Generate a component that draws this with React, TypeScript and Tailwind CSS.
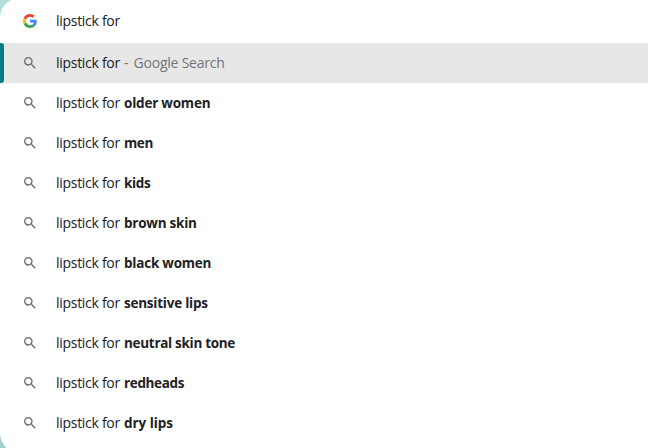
const suggestions = [
  { text: "older women", className: "tracking-[-0.21px]" },
  { text: "men", className: "tracking-[-0.4px]" },
  { text: "kids", className: "tracking-[-0.35px]" },
  { text: "brown skin", className: "tracking-[-0.24px]" },
  { text: "black women", className: "tracking-[-0.22px]" },
  { text: "sensitive lips", className: "tracking-[-0.24px]" },
  { text: "neutral skin tone", className: "tracking-[-0.3px]" },
  { text: "redheads", className: "tracking-[-0.35px]" },
  { text: "dry lips", className: "tracking-[-0.05px]" },
];

function GoogleIcon() {
  return (
    <svg viewBox="0 0 48 48" className="mx-px h-3.5 w-3.5 shrink-0">
      <path
        fill="#EA4335"
        d="M24 9.5c3.54 0 6.71 1.22 9.21 3.6l6.85-6.85C35.9 2.38 30.47 0 24 0 14.62 0 6.51 5.38 2.56 13.22l7.98 6.19C12.43 13.72 17.74 9.5 24 9.5z"
      />
      <path
        fill="#4285F4"
        d="M46.98 24.55c0-1.57-.15-3.09-.38-4.55H24v9.02h12.94c-.58 2.96-2.26 5.48-4.78 7.18l7.73 6c4.51-4.18 7.09-10.36 7.09-17.65z"
      />
      <path
        fill="#FBBC05"
        d="M10.53 28.59c-.48-1.45-.76-2.99-.76-4.59s.27-3.14.76-4.59l-7.98-6.19C.92 16.46 0 20.12 0 24c0 3.88.92 7.54 2.56 10.78l7.97-6.19z"
      />
      <path
        fill="#34A853"
        d="M24 48c6.48 0 11.93-2.13 15.89-5.81l-7.73-6c-2.15 1.45-4.92 2.3-8.16 2.3-6.26 0-11.57-4.22-13.47-9.91l-7.98 6.19C6.51 42.62 14.62 48 24 48z"
      />
    </svg>
  );
}

function SearchIcon() {
  return (
    <svg viewBox="0 0 24 24" className="h-4 w-4 shrink-0" fill="#6b6b6b">
      <path d="M15.5 14h-.79l-.28-.27A6.471 6.471 0 0 0 16 9.5 6.5 6.5 0 1 0 9.5 16c1.61 0 3.09-.59 4.23-1.57l.27.28v.79l5 4.99L20.49 19l-4.99-5zm-6 0C7.01 14 5 11.99 5 9.5S7.01 5 9.5 5 14 7.01 14 9.5 11.99 14 9.5 14z" />
    </svg>
  );
}

export default function App() {
  return (
    <div className="h-[448px] w-[648px] overflow-hidden bg-gradient-to-b from-[#b3e0dc] to-[#a3d0ca] font-['Open_Sans',sans-serif] text-sm leading-5 text-[#202124]">
      <div className="-mt-0.5 h-[455px] rounded-l-[20px] bg-white pt-0.5">
        <div className="flex h-[43px] items-center gap-[18px] pb-px pl-[22px]">
          <GoogleIcon />
          <span className="tracking-[-0.29px]">lipstick for</span>
        </div>
        <ul>
          <li className="flex h-10 items-center bg-[#e7e7e7]">
            <span className="mr-[18px] h-10 w-1 rounded-r-[3px] bg-[#007b83]" />
            <SearchIcon />
            <span className="ml-[18px] w-[68px] tracking-[-0.29px]">
              lipstick for
            </span>
            <span className="mr-[5px] text-[#70757a]">-</span>
            <span className="tracking-[-0.22px] text-[#70757a]">
              Google Search
            </span>
          </li>
          {suggestions.map(({ text, className }) => (
            <li key={text} className="flex h-10 items-center pl-[22px]">
              <SearchIcon />
              <span className="ml-[18px] w-[68px] tracking-[-0.29px]">
                lipstick for
              </span>
              <b className={`text-[13.5px] leading-5 ${className}`}>{text}</b>
            </li>
          ))}
        </ul>
      </div>
    </div>
  );
}
